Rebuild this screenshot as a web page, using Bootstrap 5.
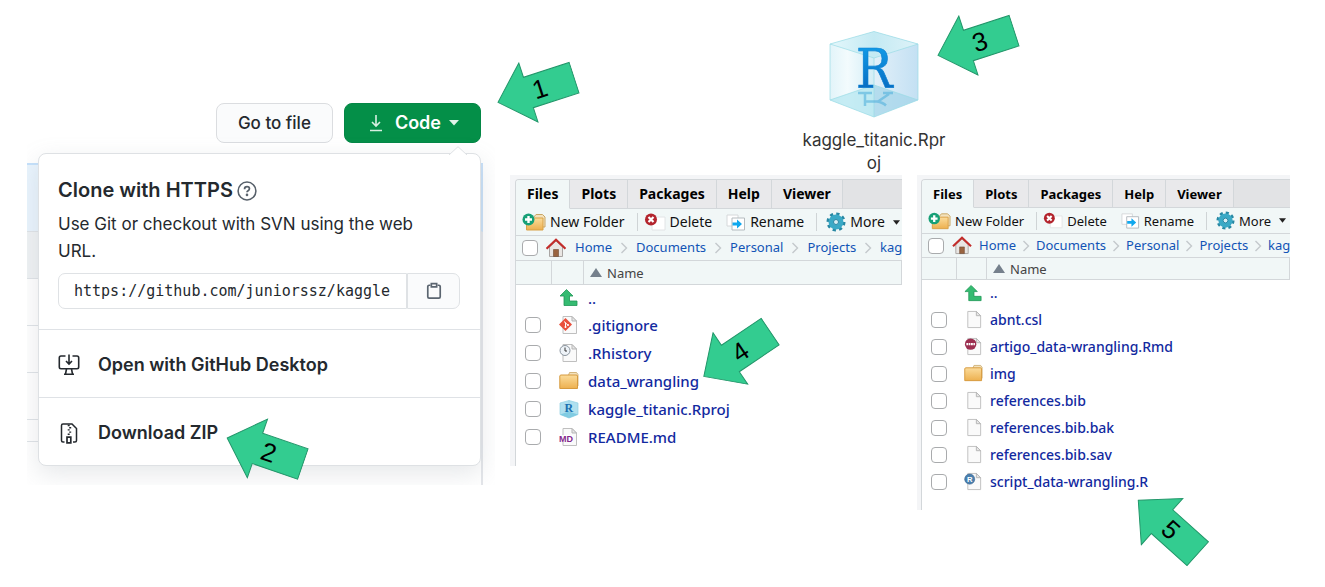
<!DOCTYPE html>
<html lang="en">
<head>
<meta charset="utf-8">
<meta name="viewport" content="width=device-width, initial-scale=1">
<title>Download and open the project</title>
<link href="https://cdn.jsdelivr.net/npm/bootstrap@5.3.0/dist/css/bootstrap.min.css" rel="stylesheet">
<style>
  body { background: #fff; font-family: "Noto Sans", "Liberation Sans", sans-serif; color: #222; }
  svg { display: block; flex: none; }
  .tutorial { padding: 0 35px 60px 27px; gap: 15px; }
  .col-repo { flex: 468 1 0; min-width: 0; }
  .col-local { flex: 780 1 0; min-width: 0; }

  /* numbered arrows lying over the screens */
  .step { position: absolute; z-index: 5; width: 82px; height: 64px; overflow: visible; pointer-events: none; }
  .step text { font: 26px "Liberation Sans", sans-serif; fill: #000; text-anchor: middle; }
  .step-1 { right: -82px; top: 58px; transform: rotate(-18deg); }
  .step-2 { left: 185px; top: 22px; transform: rotate(19deg); }
  .step-3 { left: 136px; top: -17px; transform: rotate(-18deg); }
  .step-4 { left: 186px; top: 147px; transform: rotate(-34deg); }
  .step-5 { left: 210px; top: 320px; transform: rotate(42deg); }

  /* repository page */
  .repo { font-family: Inter, "Liberation Sans", sans-serif; color: #24292e; padding: 103px 14px 19px 11px; overflow: hidden; }
  .backdrop { position: absolute; inset: 163px 12px 0 0; border-right: 2px solid #e4e6ea; }
  .backdrop div { height: 47px; border-bottom: 1px solid #dfe3e7; }
  .backdrop .commit { height: 69px; background: #e9f4fd; border-top: 2px solid #c5e1fb; margin-right: -2px; border-right: 2px solid #c9e0f8; }
  .backdrop .bar { background: #eff2f4; }
  .backdrop .short { height: 22px; }
  .btn-row { gap: 11px; }
  .btn-repo { height: 40px; border-radius: 8px; font-size: 17px; padding: 0 21px; line-height: 24px; }
  .btn-file { background: #fafbfc; border: 1px solid #dbdde0; font-weight: 500; color: #24292e; }
  .btn-code { background: #048f48; border: 1px solid #048746; color: #fff; font-weight: 600; font-size: 18px; padding: 0 21px 0 24px; }
  .clone { background: #fff; border: 1px solid #dee1e4; border-radius: 8px; margin-top: 10px; box-shadow: 0 8px 24px rgba(140,149,159,.22); }
  .clone-tip { position: absolute; right: 13px; top: -8px; }
  .clone-http { padding: 23px 20px 20px 19px; }
  .clone h1 { font-size: 20px; font-weight: 600; line-height: 27px; }
  .clone p { font-size: 17px; line-height: 27px; padding: 7px 24px 0 0; margin-bottom: 8px; }
  .clone .form-control { height: 36px; font: 15px "DejaVu Sans Mono", monospace; color: #24292e; border: 1px solid #dfe2e5; border-radius: 7px 0 0 7px; padding: 0 15px; text-overflow: clip; }
  .btn-copy { width: 53px; background: #fafbfc; border: 1px solid #dfe2e5; border-radius: 0 7px 7px 0; padding: 0; }
  .clone-act { height: 68px; border-top: 1px solid #dfe2e6; padding: 2px 0 0 19px; gap: 18px; font-size: 18px; font-weight: 600; color: #24292e; text-decoration: none; }

  /* project file on the desktop */
  .desk { padding: 28px 52px 0 0; }
  .desk-file { width: 150px; font-family: Inter, "Liberation Sans", sans-serif; font-size: 17px; line-height: 23px; word-break: break-all; color: #333; }
  .desk-file span { margin-top: 11px; display: block; }

  /* file panes */
  .panes { display: grid; grid-template-columns: minmax(0, 392fr) minmax(0, 373fr); gap: 15px; align-items: start; }
  .pane { --tab: 29px; --tool: 27px; --crumb: 25px; --head: 24px; --row: 28px; --fs: 14px; --file: 15px; --gap: 8px; --lead: 9px; --c1: 36px; --c2: 32px; --txt: 4px; }
  .pane-b { --tab: 28px; --tool: 26px; --crumb: 24px; --head: 22px; --row: 27px; --fs: 13px; --file: 14px; --gap: 6px; --lead: 7px; --c1: 35px; --c2: 30px; --txt: 3px; }
  .pane-box { background: #f4f5f7; padding: 4px 0 0 5px; overflow: hidden; }
  .pane-b .pane-box { padding-left: 4px; }
  .pane-in { border: solid #d3d7da; border-width: 1px 0 0 1px; border-radius: 4px 0 0 0; background: #fff; padding-bottom: 15px; white-space: nowrap; overflow: hidden; }
  .pane .nav { background: #e2e3e5; height: var(--tab); border-bottom: 1px solid #d3d7da; flex-wrap: nowrap; }
  .pane .nav-link { height: var(--tab); padding: 0 11px; font-size: var(--fs); font-weight: 700; line-height: 28px; color: #000; background: #e9e9eb; border-right: 1px solid #d3d7da; border-bottom: 1px solid #d3d7da; }
  .pane .nav-link.active { background: #f1f7f7; border-bottom-color: #f1f7f7; }
  .tools { height: var(--tool); background: #f1f7f7; border-bottom: 1px solid #d3d7da; padding-left: 6px; }
  .tools button { display: flex; align-items: center; border: 0; background: none; padding: 0; font-size: var(--fs); color: #111; line-height: 20px; gap: 4px; flex: none; }
  .tools i { width: 1px; height: 18px; background: #cfd4d6; flex: none; margin: 0 6px 0 12px; }
  .tools .after { margin-left: 14px; }
  .tools .after + i { margin-right: 9px; }
  .crumbs { height: var(--crumb); background: #f1f7f7; border-bottom: 1px solid #d3d7da; padding-left: 6px; font-size: 13px; }
  .crumbs ol { gap: var(--gap); margin-left: var(--lead); }
  .crumbs a { color: #1254b6; text-decoration: none; }
  .pane input { appearance: none; display: block; width: 16px; height: 16px; border: 1px solid #a9abad; border-radius: 4px; background: #fff; margin: 0; flex: none; }
  .files { width: 100%; table-layout: fixed; border-collapse: separate; border-spacing: 0; }
  .files td, .files th { padding: 0; vertical-align: middle; line-height: 20px; }
  .files .c1 { width: var(--c1); }
  .files .c2 { width: var(--c2); }
  .files th { height: var(--head); background: #f1f7f7; border-right: 1px solid #d3d7da; border-bottom: 1px solid #d3d7da; font-size: 13px; font-weight: 400; color: #444; }
  .files th:last-child { padding-left: 5px; }
  .files td { height: var(--row); font-size: var(--file); font-weight: 500; }
  .files td:last-child { padding-left: var(--txt); }
  .files .up td { height: 26px; }
  .files td input { margin-left: 9px; }
  .files td svg { margin-left: 7px; }
  .files a { color: #1229a0; text-decoration: none; }
</style>
</head>
<body>

<svg width="0" height="0" class="position-absolute" aria-hidden="true">
  <defs>
    <linearGradient id="gFold" x1="0" y1="0" x2="0" y2="1"><stop offset="0" stop-color="#fbdc9b"/><stop offset="1" stop-color="#edb04f"/></linearGradient>
    <linearGradient id="gR" x1="0" y1="0" x2="0" y2="1"><stop offset="0" stop-color="#13a4ee"/><stop offset="1" stop-color="#0560b8"/></linearGradient>
    <linearGradient id="gL" x1="0" y1="0" x2="1" y2="0"><stop offset="0" stop-color="#e2f4f9"/><stop offset=".4" stop-color="#f3fbfd"/><stop offset="1" stop-color="#d2edf6"/></linearGradient>
    <linearGradient id="gRt" x1="0" y1="0" x2="1" y2="0"><stop offset="0" stop-color="#e2f0f9"/><stop offset="1" stop-color="#c3e0f3"/></linearGradient>
    <linearGradient id="gT" x1="0" y1="0" x2="1" y2="0"><stop offset="0" stop-color="#e4f7fb"/><stop offset=".5" stop-color="#c4eaf3"/><stop offset="1" stop-color="#def2f8"/></linearGradient>
  </defs>
  <symbol id="arrow" viewBox="0 0 82 64"><path d="M1 32 33 1V16H81V48H33V63Z" fill="#33cc90" stroke="#23966a"/></symbol>
  <symbol id="page" viewBox="0 0 20 20"><path d="M4 1.500h9l4.500 4.500v12.500H4z" fill="#fafafa" stroke="#bfbfbf"/><path d="M13 1.500V6h4.500z" fill="#e8e8e8" stroke="#b5b5b5"/></symbol>
  <symbol id="folder" viewBox="0 0 20 20"><path d="M9 5.500 10.500 1.500H17.500L19 3.500V15H9z" fill="#f3e2bd" stroke="#c9a665" stroke-width=".8"/><path d="M.8 5Q1 4 2 4H17Q18.500 4 18.500 5V17.500H.8z" fill="url(#gFold)" stroke="#d69a3e"/></symbol>
  <symbol id="newfolder" viewBox="0 0 24 20"><path d="M11 6 14 2.500h6.500L23 5V15H11z" fill="#f3e2bd" stroke="#c9a665"/><path d="M4.500 6H21V18H4.500z" fill="url(#gFold)" stroke="#d9a147"/><circle cx="6.500" cy="7.500" r="6" fill="#17a077"/><path d="M6.500 4v7M3 7.500h7" stroke="#fff" stroke-width="2.400"/></symbol>
  <symbol id="delete" viewBox="0 0 22 20"><path d="M8 5h13v13H8z" fill="#fff" stroke="#e2e4e6"/><circle cx="7" cy="7.500" r="6" fill="#b3242d"/><path d="m4.500 5 5 5m0-5-5 5" stroke="#fff" stroke-width="2.200"/></symbol>
  <symbol id="rename" viewBox="0 0 20 20"><path d="M1 3h11v11H1z" fill="#fff" stroke="#d5d8da"/><path d="M6 6h12.500v12H6z" fill="#fff" stroke="#b4bbbf"/><path d="M6.500 10.500h4.500V7.500l5 4.500-5 4.500V13.500H6.500z" fill="#10a8ee"/></symbol>
  <symbol id="gear" viewBox="0 0 20 20"><circle cx="10" cy="10" r="8" fill="none" stroke="#2787a3" stroke-width="3" stroke-dasharray="3.200 3.083"/><circle cx="10" cy="10" r="5" fill="none" stroke="#3aa9c6" stroke-width="5"/><circle cx="10" cy="10" r="2.500" fill="#d9eef4" stroke="#2383a0"/></symbol>
  <symbol id="house" viewBox="0 0 20 20"><path d="M3.500 9 10 3l6.500 6v9.500h-13z" fill="#e9e6e3" stroke="#a9a5a3"/><path d="M7.500 11.500h5v7h-5z" fill="#9a6440" stroke="#6d4a33" stroke-width=".6"/><path d="M.5 10.800 10 1.800l9.500 9" fill="none" stroke="#c32d2b" stroke-width="2.200"/></symbol>
  <symbol id="up" viewBox="0 0 20 20"><path d="M7.500 1.500 14 8H10.500V13H18V17.500H5V8H1z" fill="#35bb71" stroke="#1f9655" stroke-width=".8"/></symbol>
  <symbol id="chev" viewBox="0 0 8 12"><path d="m1.500 1 5 5-5 5" fill="none" stroke="#c3c9cc" stroke-width="1.400"/></symbol>
  <symbol id="git" viewBox="0 0 20 20"><use href="#page"/><path d="M6.500 3 13 9.500 6.500 16 0 9.500z" fill="#e94f3c"/><path d="M5 6.500 8.800 10M6.500 7.500v5" stroke="#fff" stroke-width="1"/><circle cx="6.500" cy="12" r="1" fill="#fff"/><circle cx="9" cy="10" r="1" fill="#fff"/></symbol>
  <symbol id="hist" viewBox="0 0 20 20"><use href="#page"/><circle cx="6" cy="7.500" r="5" fill="#eef3f8" stroke="#8a949e"/><path d="M6 4.500v3.500h2" fill="none" stroke="#333"/></symbol>
  <symbol id="cube" viewBox="0 0 90 90">
    <path d="M1 16 45 3.500V60L1 72z" fill="url(#gL)"/><path d="M89 16 45 3.500V60L89 72z" fill="url(#gRt)"/>
    <path d="M1 16V72L45 89V30z" fill="url(#gL)" opacity=".75"/><path d="M89 16V72L45 89V30z" fill="url(#gRt)" opacity=".85"/>
    <path d="M1 16 45 3.500 89 16 45 30z" fill="url(#gT)"/>
    <path d="M1 72 45 57V89z" fill="#b0e5ef" opacity=".7"/><path d="M89 72 45 57V89z" fill="#9fd3e8" opacity=".7"/>
    <path d="M1 16 45 3.500 89 16V72L45 89 1 72zM1 16 45 30 89 16M45 30V89M1 72 45 57 89 72" fill="none" stroke="#9adbe6" stroke-width="1" opacity=".7"/>
  </symbol>
  <symbol id="rmd" viewBox="0 0 20 20"><use href="#page"/><circle cx="7" cy="7.500" r="6" fill="#9c2f50"/><path d="M2.500 7.500h9" stroke="#fff" stroke-width="2.600" stroke-dasharray="2 .6 1.600 .6"/></symbol>
  <symbol id="rbox" viewBox="0 0 20 20"><path d="M1 4 10 1.500 19 4V15.500L10 19 1 15.500z" fill="#b0e0ef" stroke="#8fd0e2" stroke-width=".7"/><path d="M1 15.500 10 12.500l9 3L10 19z" fill="#7fcbe2"/><path d="M10 1.500V19" stroke="#93d2e4" stroke-width=".6"/></symbol>
</svg>

<main class="tutorial d-flex align-items-start">

  <section class="col-repo position-relative">
    <div class="repo position-relative">
      <div class="backdrop"><div class="commit"></div><div class="bar"></div><div></div><div></div><div></div><div class="short"></div></div>
      <div class="btn-row d-flex justify-content-end position-relative">
        <button type="button" class="btn btn-repo btn-file">Go to file</button>
        <button type="button" class="btn btn-repo btn-code d-flex align-items-center">
          <svg width="14" height="18" viewBox="0 0 14 18" fill="none" stroke="#d7efe1" stroke-width="1.600"><path d="M7 1v11M3 8l4 4 4-4M1 16.500h12"/></svg>
          <span class="ms-2 ps-1 me-2">Code</span>
          <svg width="10" height="6" viewBox="0 0 10 6"><path d="M0 0h10L5 5.500z" fill="#e2f3e9"/></svg>
        </button>
      </div>
      <div class="clone position-relative">
        <svg class="clone-tip" width="18" height="9" viewBox="0 0 18 9"><path d="M0 9 9 .7 18 9" fill="#fff" stroke="#dee1e4"/></svg>
        <div class="clone-http">
          <h1 class="d-flex align-items-center m-0">Clone with HTTPS
            <svg class="ms-1" width="20" height="20" viewBox="0 0 22 22" fill="none" stroke="#57606a" stroke-width="1.700"><circle cx="11" cy="11" r="9.800"/><path d="M8.300 9q0-2.700 2.700-2.700t2.700 2.300q0 1.300-1.500 2.100-1.200.7-1.200 1.800" stroke-width="1.900"/><circle cx="11" cy="15.300" r=".6"/></svg>
          </h1>
          <p>Use Git or checkout with SVN using the web URL.</p>
          <div class="d-flex">
            <input class="form-control" type="text" aria-label="Clone URL" readonly value="https://github.com/juniorssz/kaggle">
            <button type="button" class="btn btn-copy flex-shrink-0" aria-label="Copy URL"><svg class="mx-auto" width="16" height="18" viewBox="0 0 18 20" fill="none" stroke="#5b6570" stroke-width="1.900"><path d="M5 3.500H3.500Q2 3.500 2 5V16.500Q2 18 3.500 18H14.500Q16 18 16 16.500V5Q16 3.500 14.500 3.500H13"/><path d="M6 1.700h6v3.600H6z"/></svg></button>
          </div>
        </div>
        <a href="#" class="clone-act d-flex align-items-center">
          <svg width="22" height="22" viewBox="0 0 22 22" fill="none" stroke="#24292e" stroke-width="1.600"><path d="M7.500 2H3Q1.300 2 1.300 3.700V13Q1.300 14.700 3 14.700H19Q20.700 14.700 20.700 13V3.700Q20.700 2 19 2H14.500M11 .5V9.500M8 7l3 3 3-3M8.500 15 7.500 20M13.500 15l1 5M6 20.300H16"/></svg>
          Open with GitHub Desktop
        </a>
        <div class="position-relative">
          <a href="#" class="clone-act d-flex align-items-center">
            <svg width="22" height="22" viewBox="0 0 22 22" fill="none" stroke="#24292e" stroke-width="1.500"><path d="M6.500 20H5Q3.500 20 3.500 18.500V3.500Q3.500 2 5 2H14L18.500 6.500V18.500Q18.500 20 17 20H15"/><path d="M9.700 3.500h2M11.200 5.700h2M9.700 7.900h2M11.200 10.100h2M9.700 12.300h2" stroke-width="1.400"/><path d="M9 15.200h3.800V20.800H9z" stroke-width="1.700"/></svg>
            Download ZIP
          </a>
          <svg class="step step-2" viewBox="0 0 82 64"><use href="#arrow"/><text x="45" y="41">2</text></svg>
        </div>
      </div>
    </div>
    <svg class="step step-1" viewBox="0 0 82 64"><use href="#arrow"/><text x="45" y="41">1</text></svg>
  </section>

  <section class="col-local">
    <div class="desk d-flex justify-content-center">
      <div class="desk-file position-relative text-center">
        <svg class="mx-auto" width="90" height="90" viewBox="0 0 90 90"><use href="#cube"/>
          <text x="27" y="60" font-family="DejaVu Serif Condensed, DejaVu Serif" font-size="54" fill="url(#gR)" stroke="#0c80d3" stroke-width=".6">R</text>
          <path d="M29 65h14M54 65h10M36 65v13M60 66 49 73.500M36 73.500h12q6 1 9 4" fill="none" stroke="#51b0dc" stroke-width="2.500" opacity=".6"/></svg>
        <span>kaggle_titanic.Rproj</span>
        <svg class="step step-3" viewBox="0 0 82 64"><use href="#arrow"/><text x="45" y="41">3</text></svg>
      </div>
    </div>

    <div class="panes">
      <div class="pane position-relative">
        <div class="pane-box"><div class="pane-in">
          <nav class="nav"><a class="nav-link active" href="#">Files</a><a class="nav-link" href="#">Plots</a><a class="nav-link" href="#">Packages</a><a class="nav-link" href="#">Help</a><a class="nav-link" href="#">Viewer</a></nav>
          <div class="tools d-flex align-items-center">
            <button type="button"><svg width="24" height="20"><use href="#newfolder"/></svg>New Folder</button><i></i>
            <button type="button"><svg width="22" height="20"><use href="#delete"/></svg>Delete</button>
            <button type="button" class="after"><svg width="20" height="20"><use href="#rename"/></svg>Rename</button><i></i>
            <button type="button"><svg width="20" height="20"><use href="#gear"/></svg>More<svg class="ms-1" width="7" height="5" viewBox="0 0 8 5"><path d="M0 0h8L4 5z" fill="#222"/></svg></button>
          </div>
          <div class="crumbs d-flex align-items-center">
            <input type="checkbox" aria-label="Select all"><svg class="ms-2" width="20" height="20"><use href="#house"/></svg>
            <ol class="list-unstyled d-flex align-items-center mb-0">
              <li><a href="#">Home</a></li><li><svg width="8" height="12"><use href="#chev"/></svg></li>
              <li><a href="#">Documents</a></li><li><svg width="8" height="12"><use href="#chev"/></svg></li>
              <li><a href="#">Personal</a></li><li><svg width="8" height="12"><use href="#chev"/></svg></li>
              <li><a href="#">Projects</a></li><li><svg width="8" height="12"><use href="#chev"/></svg></li>
              <li><a href="#">kag</a></li>
            </ol>
          </div>
          <table class="files">
            <thead><tr><th class="c1"></th><th class="c2"></th><th scope="col"><span class="d-flex align-items-center"><svg class="me-1" width="14" height="10" viewBox="0 0 14 10"><path d="M7 0 13 9H1z" fill="#75808c"/></svg>Name</span></th></tr></thead>
            <tbody>
              <tr class="up"><td></td><td><svg width="20" height="20"><use href="#up"/></svg></td><td><a href="#">..</a></td></tr>
              <tr><td><input type="checkbox" aria-label=".gitignore"></td><td><svg width="20" height="20"><use href="#git"/></svg></td><td><a href="#">.gitignore</a></td></tr>
              <tr><td><input type="checkbox" aria-label=".Rhistory"></td><td><svg width="20" height="20"><use href="#hist"/></svg></td><td><a href="#">.Rhistory</a></td></tr>
              <tr><td><input type="checkbox" aria-label="data_wrangling"></td><td><svg width="20" height="20"><use href="#folder"/></svg></td><td><a href="#">data_wrangling</a></td></tr>
              <tr><td><input type="checkbox" aria-label="kaggle_titanic.Rproj"></td><td><svg width="20" height="20" viewBox="0 0 20 20"><use href="#rbox"/><text x="5.500" y="12.500" font-family="Liberation Serif" font-weight="700" font-size="12" fill="#1b6fae">R</text></svg></td><td><a href="#">kaggle_titanic.Rproj</a></td></tr>
              <tr><td><input type="checkbox" aria-label="README.md"></td><td><svg width="20" height="20" viewBox="0 0 20 20"><use href="#page"/><path d="M0 8h14v7H0z" fill="#fff" opacity=".9"/><text x="0" y="15" font-family="Liberation Sans" font-weight="700" font-size="9" fill="#84278c">MD</text></svg></td><td><a href="#">README.md</a></td></tr>
            </tbody>
          </table>
        </div></div>
        <svg class="step step-4" viewBox="0 0 82 64"><use href="#arrow"/><text x="45" y="41">4</text></svg>
      </div>

      <div class="pane pane-b position-relative">
        <div class="pane-box"><div class="pane-in">
          <nav class="nav"><a class="nav-link active" href="#">Files</a><a class="nav-link" href="#">Plots</a><a class="nav-link" href="#">Packages</a><a class="nav-link" href="#">Help</a><a class="nav-link" href="#">Viewer</a></nav>
          <div class="tools d-flex align-items-center">
            <button type="button"><svg width="23" height="20"><use href="#newfolder"/></svg>New Folder</button><i></i>
            <button type="button"><svg width="20" height="19"><use href="#delete"/></svg>Delete</button>
            <button type="button" class="after"><svg width="19" height="19"><use href="#rename"/></svg>Rename</button><i></i>
            <button type="button"><svg width="19" height="19"><use href="#gear"/></svg>More<svg class="ms-1" width="7" height="5" viewBox="0 0 8 5"><path d="M0 0h8L4 5z" fill="#222"/></svg></button>
          </div>
          <div class="crumbs d-flex align-items-center">
            <input type="checkbox" aria-label="Select all"><svg class="ms-2" width="20" height="19"><use href="#house"/></svg>
            <ol class="list-unstyled d-flex align-items-center mb-0">
              <li><a href="#">Home</a></li><li><svg width="8" height="12"><use href="#chev"/></svg></li>
              <li><a href="#">Documents</a></li><li><svg width="8" height="12"><use href="#chev"/></svg></li>
              <li><a href="#">Personal</a></li><li><svg width="8" height="12"><use href="#chev"/></svg></li>
              <li><a href="#">Projects</a></li><li><svg width="8" height="12"><use href="#chev"/></svg></li>
              <li><a href="#">kag</a></li>
            </ol>
          </div>
          <table class="files">
            <thead><tr><th class="c1"></th><th class="c2"></th><th scope="col"><span class="d-flex align-items-center"><svg class="me-1" width="14" height="10" viewBox="0 0 14 10"><path d="M7 0 13 9H1z" fill="#75808c"/></svg>Name</span></th></tr></thead>
            <tbody>
              <tr class="up"><td></td><td><svg width="19" height="19"><use href="#up"/></svg></td><td><a href="#">..</a></td></tr>
              <tr><td><input type="checkbox" aria-label="abnt.csl"></td><td><svg width="19" height="19"><use href="#page"/></svg></td><td><a href="#">abnt.csl</a></td></tr>
              <tr><td><input type="checkbox" aria-label="artigo_data-wrangling.Rmd"></td><td><svg width="19" height="19"><use href="#rmd"/></svg></td><td><a href="#">artigo_data-wrangling.Rmd</a></td></tr>
              <tr><td><input type="checkbox" aria-label="img"></td><td><svg width="19" height="19"><use href="#folder"/></svg></td><td><a href="#">img</a></td></tr>
              <tr><td><input type="checkbox" aria-label="references.bib"></td><td><svg width="19" height="19"><use href="#page"/></svg></td><td><a href="#">references.bib</a></td></tr>
              <tr><td><input type="checkbox" aria-label="references.bib.bak"></td><td><svg width="19" height="19"><use href="#page"/></svg></td><td><a href="#">references.bib.bak</a></td></tr>
              <tr><td><input type="checkbox" aria-label="references.bib.sav"></td><td><svg width="19" height="19"><use href="#page"/></svg></td><td><a href="#">references.bib.sav</a></td></tr>
              <tr><td><input type="checkbox" aria-label="script_data-wrangling.R"></td><td><svg width="19" height="19" viewBox="0 0 20 20"><use href="#page"/><circle cx="6" cy="7.500" r="5.300" fill="#4a7fae" stroke="#3c6791" stroke-width=".6"/><text x="3.200" y="10.600" font-family="Liberation Sans" font-weight="700" font-size="8" fill="#fff">R</text></svg></td><td><a href="#">script_data-wrangling.R</a></td></tr>
            </tbody>
          </table>
        </div></div>
        <svg class="step step-5" viewBox="0 0 82 64"><use href="#arrow"/><text x="45" y="41">5</text></svg>
      </div>
    </div>
  </section>
</main>
<script src="https://cdn.jsdelivr.net/npm/bootstrap@5.3.0/dist/js/bootstrap.bundle.min.js"></script>
</body>
</html>
